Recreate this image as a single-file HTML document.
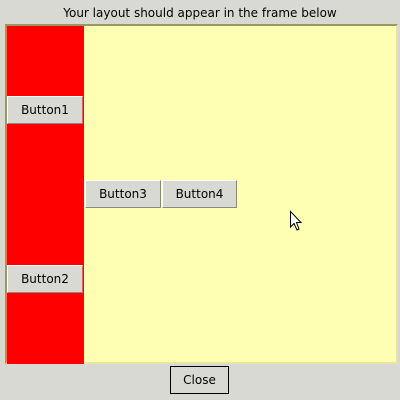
<!DOCTYPE html>
<html><head><style>
body{margin:0;width:400px;height:400px;background:#d9d9d4;position:relative;overflow:hidden;font-family:"DejaVu Sans","Liberation Sans",sans-serif;font-size:12px;color:#000}
.t{position:absolute;top:6px;left:0;width:400px;text-align:center;font-size:12px}
.f{position:absolute;left:5px;top:24px;width:389px;height:336px;border:2px solid;border-color:#999966 #e6e6a0 #e6e6a0 #999966;background:#ffffb3}
.r{position:absolute;left:7px;top:26px;width:77px;height:338px;background:#f00}
.b{position:absolute;box-sizing:border-box;height:28px;background:#d9d9d4;border:1px solid;border-color:#fff #888 #888 #fff;text-align:center;line-height:26px}
.c{position:absolute;left:170px;top:366px;width:59px;height:28px;box-sizing:border-box;border:1px solid #000;background:#d9d9d4;text-align:center;line-height:26px}
</style></head><body>
<div class="t">Your layout should appear in the frame below</div>
<div class="f"></div>
<div class="r"></div>
<div class="b" style="left:7px;top:96px;width:76px">Button1</div>
<div class="b" style="left:7px;top:265px;width:76px">Button2</div>
<div class="b" style="left:85px;top:180px;width:76px">Button3</div>
<div class="b" style="left:162px;top:180px;width:75px">Button4</div>
<div class="c">Close</div>
<svg style="position:absolute;left:289px;top:210px" width="14" height="22"><path d="M1.5 1.5 L1.5 17 L5 13.5 L8 20 L10 19 L7.5 12.5 L12 12.5 Z" fill="#fff" stroke="#000" stroke-width="1"/></svg>
</body></html>
